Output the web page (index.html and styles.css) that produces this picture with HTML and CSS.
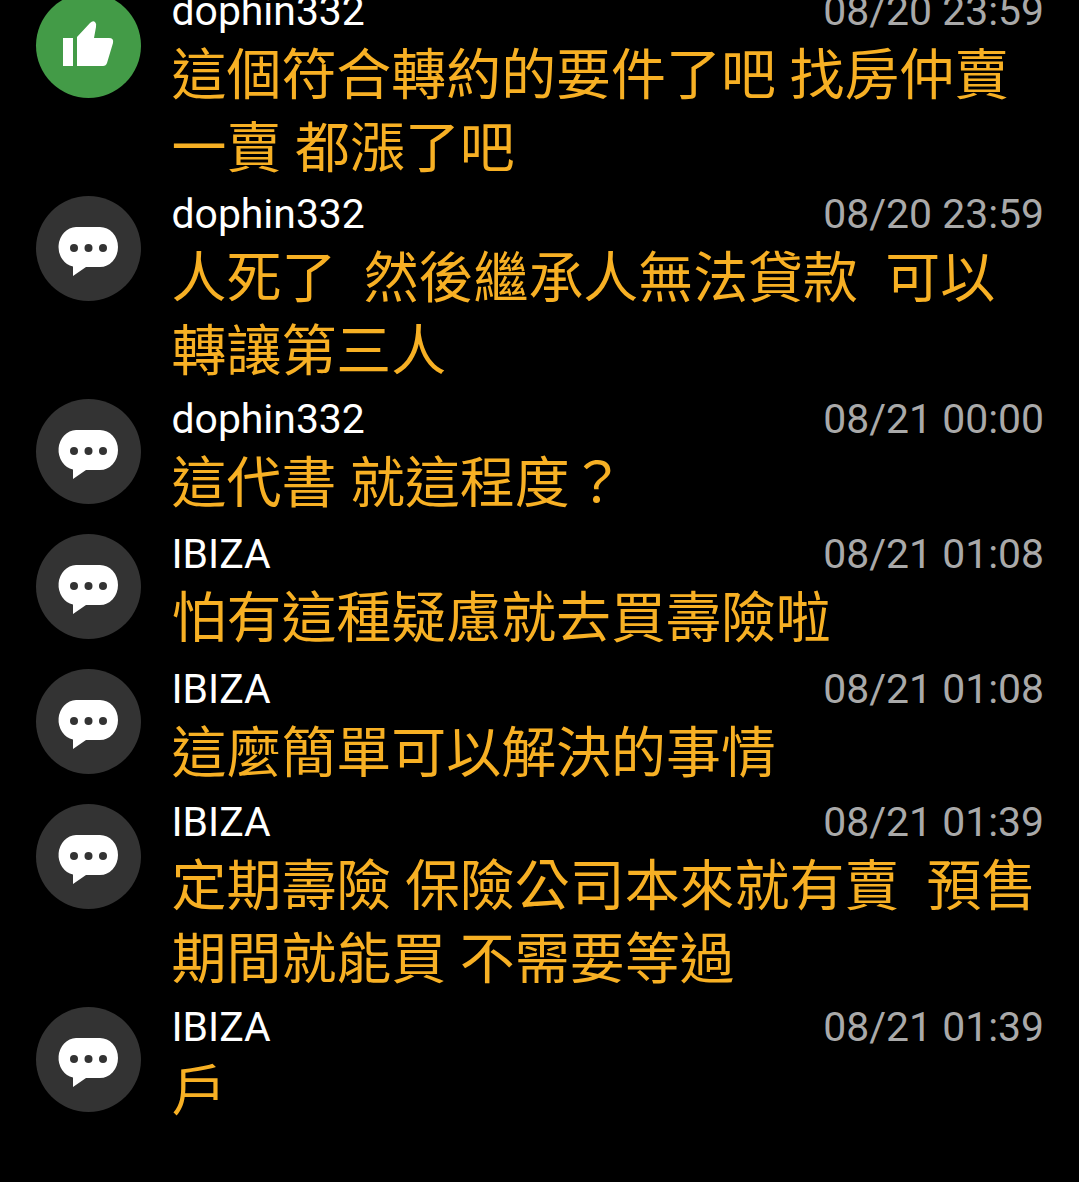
FILE: index.html
```html
<!DOCTYPE html>
<html lang="zh-Hant">
<head>
<meta charset="utf-8">
<title>Comments</title>
<link rel="stylesheet" href="styles.css">
</head>
<body>
<main class="list">
  <article class="row double">
    <div class="avatar like"><svg viewBox="0 0 105 105" width="105" height="105"><path fill="#fff" d="M27 45h10v28H27zM41 73V44L54 30q3-3 5-1 2 2 1 5l-2 11h15q5 0 4 5l-6 20q-1 3-4 3z"/></svg></div>
    <div class="body"><div class="head"><span class="name">dophin332</span><span class="time">08/20 23:59</span></div>
    <p class="msg">這個符合轉約的要件了吧 找房仲賣<br>一賣 都漲了吧</p></div>
  </article>
  <article class="row double">
    <div class="avatar"><svg viewBox="0 0 105 105" width="105" height="105"><path fill="#fff" d="M40 31h24a18 20 0 0 1 0 40H50l-13 9v-9.400A18 20 0 0 1 40 31z"/><g fill="#333"><circle cx="38" cy="52" r="4"/><circle cx="52.500" cy="52" r="4"/><circle cx="67" cy="52" r="4"/></g></svg></div>
    <div class="body"><div class="head"><span class="name">dophin332</span><span class="time">08/20 23:59</span></div>
    <p class="msg">人死了&nbsp; 然後繼承人無法貸款&nbsp; 可以<br>轉讓第三人</p></div>
  </article>
  <article class="row single">
    <div class="avatar"><svg viewBox="0 0 105 105" width="105" height="105"><path fill="#fff" d="M40 31h24a18 20 0 0 1 0 40H50l-13 9v-9.400A18 20 0 0 1 40 31z"/><g fill="#333"><circle cx="38" cy="52" r="4"/><circle cx="52.500" cy="52" r="4"/><circle cx="67" cy="52" r="4"/></g></svg></div>
    <div class="body"><div class="head"><span class="name">dophin332</span><span class="time">08/21 00:00</span></div>
    <p class="msg">這代書 就這程度？</p></div>
  </article>
  <article class="row single">
    <div class="avatar"><svg viewBox="0 0 105 105" width="105" height="105"><path fill="#fff" d="M40 31h24a18 20 0 0 1 0 40H50l-13 9v-9.400A18 20 0 0 1 40 31z"/><g fill="#333"><circle cx="38" cy="52" r="4"/><circle cx="52.500" cy="52" r="4"/><circle cx="67" cy="52" r="4"/></g></svg></div>
    <div class="body"><div class="head"><span class="name">IBIZA</span><span class="time">08/21 01:08</span></div>
    <p class="msg">怕有這種疑慮就去買壽險啦</p></div>
  </article>
  <article class="row single">
    <div class="avatar"><svg viewBox="0 0 105 105" width="105" height="105"><path fill="#fff" d="M40 31h24a18 20 0 0 1 0 40H50l-13 9v-9.400A18 20 0 0 1 40 31z"/><g fill="#333"><circle cx="38" cy="52" r="4"/><circle cx="52.500" cy="52" r="4"/><circle cx="67" cy="52" r="4"/></g></svg></div>
    <div class="body"><div class="head"><span class="name">IBIZA</span><span class="time">08/21 01:08</span></div>
    <p class="msg">這麼簡單可以解決的事情</p></div>
  </article>
  <article class="row double">
    <div class="avatar"><svg viewBox="0 0 105 105" width="105" height="105"><path fill="#fff" d="M40 31h24a18 20 0 0 1 0 40H50l-13 9v-9.400A18 20 0 0 1 40 31z"/><g fill="#333"><circle cx="38" cy="52" r="4"/><circle cx="52.500" cy="52" r="4"/><circle cx="67" cy="52" r="4"/></g></svg></div>
    <div class="body"><div class="head"><span class="name">IBIZA</span><span class="time">08/21 01:39</span></div>
    <p class="msg">定期壽險 保險公司本來就有賣&nbsp; 預售<br>期間就能買 不需要等過</p></div>
  </article>
  <article class="row single">
    <div class="avatar"><svg viewBox="0 0 105 105" width="105" height="105"><path fill="#fff" d="M40 31h24a18 20 0 0 1 0 40H50l-13 9v-9.400A18 20 0 0 1 40 31z"/><g fill="#333"><circle cx="38" cy="52" r="4"/><circle cx="52.500" cy="52" r="4"/><circle cx="67" cy="52" r="4"/></g></svg></div>
    <div class="body"><div class="head"><span class="name">IBIZA</span><span class="time">08/21 01:39</span></div>
    <p class="msg">戶</p></div>
  </article>
</main>
</body>
</html>
```
FILE: styles.css
```css
html, body {
  margin: 0;
  height: 100%;
  background: #000;
  overflow: hidden;
}
.list {
  margin-top: -15px;
  padding: 0 35px 0 36px;
  font-family: Roboto, "Noto Sans CJK TC", sans-serif;
}
.row {
  display: flex;
  gap: 30.500px;
  align-items: flex-start;
}
.row.double { height: 203px; }
.row.single { height: 135px; }
.avatar {
  flex: none;
  width: 105px;
  height: 105px;
  margin-top: 8px;
  border-radius: 50%;
  background: #333;
}
.avatar svg { display: block; }
.avatar.like { background: #439b47; }
.body { flex: 1; min-width: 0; }
.double .body { padding-top: 1px; }
.single .body { padding-top: 3px; }
.head {
  display: flex;
  justify-content: space-between;
  align-items: center;
  height: 50px;
  font-size: 40.900px;
  line-height: 50px;
}
.name { color: #fff; }
.time { color: #a9a9a9; }
.msg {
  margin: 3px 0 0;
  color: #f7b024;
  font-size: 54.950px;
  line-height: 73px;
  white-space: nowrap;
}
```
